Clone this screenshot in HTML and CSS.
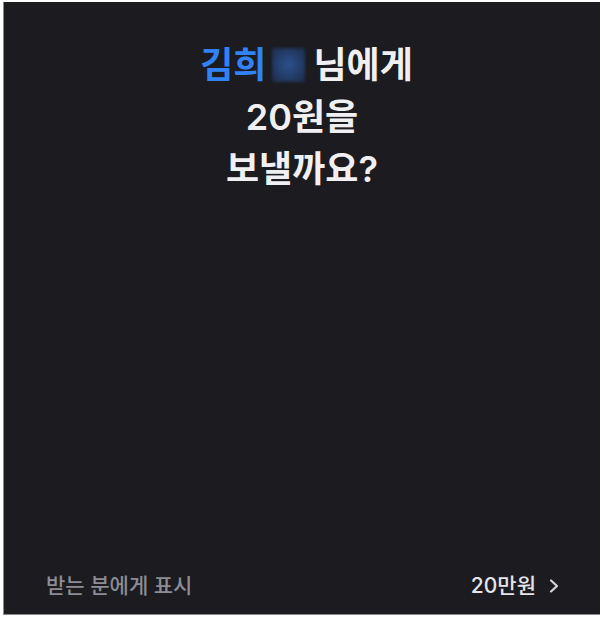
FILE: index.html
```html
<!DOCTYPE html>
<html lang="ko">
<head>
<meta charset="utf-8">
<link rel="stylesheet" href="styles.css">
</head>
<body>
<div class="screen">
  <div class="title">
    <div class="line first"><span class="name">김희</span><span class="redact"></span><span>님에게</span></div>
    <div class="line">20원을</div>
    <div class="line">보낼까요?</div>
  </div>
  <div class="spacer"></div>
  <div class="footer">
    <span class="label">받는 분에게 표시</span>
    <span class="value">20만원
      <svg class="chev" width="12" height="16" viewBox="0 0 12 16"><path d="M3 2.5 L9 8 L3 13.5" fill="none" stroke="#d6d6dc" stroke-width="2.2" stroke-linecap="round" stroke-linejoin="round"/></svg>
    </span>
  </div>
</div>
</body>
</html>
```
FILE: styles.css
```css
html, body {
  margin: 0;
  padding: 0;
  background: #ffffff;
}
.screen {
  box-sizing: border-box;
  margin: 2px 5px 0 3px;
  width: 597px;
  height: 613px;
  background: #1b1b20;
  border-left: 1px solid #8a8a8a;
  border-bottom: 1px solid #8a8a8a;
  display: flex;
  flex-direction: column;
  font-family: Inter, "Noto Sans CJK KR", sans-serif;
}
.title {
  padding-top: 37px;
  display: flex;
  flex-direction: column;
  align-items: center;
  color: #f0f0f3;
  font-size: 36px;
  font-weight: 600;
  line-height: 52px;
}
.line {
  display: flex;
  align-items: center;
}
.first {
  padding-left: 9px;
}
.name {
  color: #3182f6;
}
.redact {
  display: inline-block;
  width: 33px;
  height: 34px;
  margin: 0 8px 0 6px;
  background: radial-gradient(ellipse at center, #2b4f8c 0%, #24406f 45%, #1d2a45 100%);
  filter: blur(1.5px);
}
.spacer {
  flex: 1;
}
.footer {
  display: flex;
  justify-content: space-between;
  align-items: center;
  padding: 0 40px 13px 42px;
  font-size: 21px;
  line-height: 30px;
}
.label {
  color: #8c8c94;
  font-weight: 500;
}
.value {
  color: #e4e4ea;
  font-weight: 500;
  display: flex;
  align-items: center;
  gap: 12px;
}
.chev {
  display: block;
}
```
